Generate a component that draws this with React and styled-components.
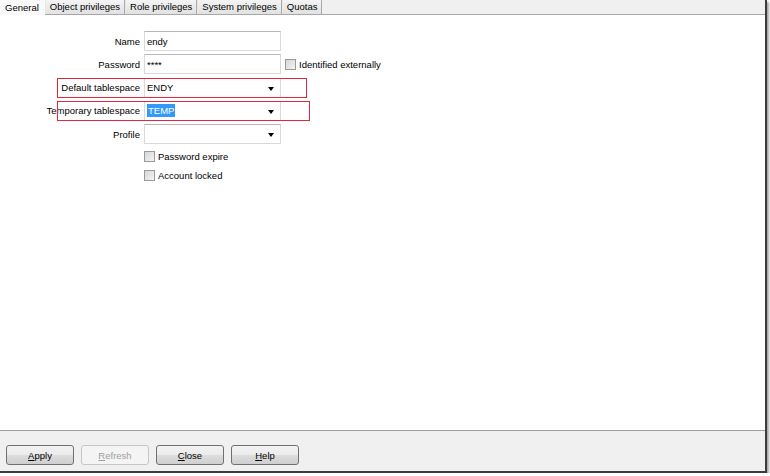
import React from 'react';
import styled, { createGlobalStyle } from 'styled-components';

const GlobalStyle = createGlobalStyle`
  html, body {
    margin: 0;
    padding: 0;
    background: #ffffff;
  }
  body {
    font-family: "Liberation Sans", Arial, sans-serif;
    font-size: 9.5px;
    color: #000;
  }
`;

const Window = styled.div`
  width: 765px;
  height: 471px;
  display: flex;
  flex-direction: column;
  background: #f0f0f0;
  border-right: 2px solid #3c3c3c;
  border-bottom: 2px solid #3c3c3c;
  box-shadow: 2px 2px 2px rgba(0, 0, 0, 0.35);
`;

const TabStrip = styled.div`
  height: 14px;
  display: flex;
  align-items: flex-end;
  background: #f0f0f0;
  border-bottom: 1px solid #a9a9a9;
`;

const Tab = styled.div`
  height: ${(p) => (p.$active ? '15px' : '14px')};
  margin-bottom: ${(p) => (p.$active ? '-1px' : '0')};
  padding: 0 ${(p) => (p.$active ? '5px' : '4px')} 0 ${(p) => (p.$active ? '5px' : '4px')};
  display: flex;
  align-items: center;
  box-sizing: border-box;
  line-height: 1;
  background: ${(p) => (p.$active ? '#f9f9f9' : 'linear-gradient(#f4f4f4, #e1e1e1)')};
  border-right: 1px solid ${(p) => (p.$active ? 'transparent' : '#a9a9a9')};
  border-left: ${(p) => (p.$first ? 'none' : '1px solid #e8e8e8')};
  white-space: nowrap;
`;

const Panel = styled.div`
  flex: 1;
  background: #ffffff;
  padding-top: 16px;
  display: flex;
  flex-direction: column;
`;

const Form = styled.div`
  display: grid;
  grid-template-columns: 140px 137px auto;
  column-gap: 4px;
  row-gap: 3.25px;
  grid-auto-rows: 20px;
  align-items: center;
`;

const Label = styled.div`
  text-align: right;
  white-space: nowrap;
`;

const Row = styled.div`
  display: contents;
`;

const Field = styled.div`
  position: relative;
  height: 20px;
  box-sizing: border-box;
  border: 1px solid #dadada;
  border-top-color: #b8b8b8;
  background: #fff;
  display: flex;
  align-items: center;
  padding-left: 2px;
`;

const Arrow = styled.span`
  position: absolute;
  right: 6px;
  top: 8px;
  width: 0;
  height: 0;
  border-left: 3.5px solid transparent;
  border-right: 3.5px solid transparent;
  border-top: 4px solid #000;
`;

const Selected = styled.span`
  background: #3399ff;
  color: #fff;
  padding: 1px 1px;
`;

const RedBox = styled.div`
  position: absolute;
  left: ${(p) => p.$left}px;
  width: ${(p) => p.$width}px;
  height: 20px;
  box-sizing: border-box;
  border: 1px solid #e2283c;
  pointer-events: none;
`;

const Annotated = styled.div`
  position: relative;
`;

const Box = styled.span`
  width: 11px;
  height: 11px;
  box-sizing: border-box;
  border: 1px solid #9a9a9a;
  background: linear-gradient(135deg, #d6d6d6, #f4f4f4);
  flex-shrink: 0;
`;

const Check = styled.label`
  display: flex;
  align-items: center;
  gap: 3px;
  white-space: nowrap;
`;

const Checks = styled.div`
  display: flex;
  flex-direction: column;
  gap: 8px;
  margin-top: 7px;
  padding-left: 144px;
`;

const Footer = styled.div`
  height: 41px;
  border-top: 1px solid #a0a0a0;
  background: #f0f0f0;
  display: flex;
  align-items: flex-start;
  gap: 7px;
  padding: 14px 0 0 6px;
  box-sizing: border-box;
`;

const Button = styled.div`
  width: 68px;
  height: 20px;
  box-sizing: border-box;
  border: 1px solid ${(p) => (p.$disabled ? '#c6c6c6' : '#707070')};
  border-radius: 3px;
  background: ${(p) =>
    p.$disabled ? '#f4f4f4' : 'linear-gradient(#f2f2f2 0%, #ebebeb 50%, #dddddd 51%, #cfcfcf 100%)'};
  color: ${(p) => (p.$disabled ? '#a0a0a0' : '#000')};
  display: flex;
  align-items: center;
  justify-content: center;
  u {
    text-decoration: underline;
  }
`;

const rows = [
  { label: 'Name', value: 'endy' },
  { label: 'Password', value: '****', extra: 'Identified externally' },
  { label: 'Default tablespace', value: 'ENDY', select: true },
  { label: 'Temporary tablespace', value: 'TEMP', select: true, selected: true },
  { label: 'Profile', value: '', select: true },
];

export default function App() {
  return (
    <>
      <GlobalStyle />
      <Window>
        <TabStrip>
          <Tab $active $first>General</Tab>
          <Tab>Object privileges</Tab>
          <Tab>Role privileges</Tab>
          <Tab>System privileges</Tab>
          <Tab>Quotas</Tab>
        </TabStrip>
        <Panel>
          <Annotated>
            <Form>
              {rows.map((r) => (
                <Row key={r.label}>
                  <Label>{r.label}</Label>
                  <Field>
                    {r.selected ? <Selected>{r.value}</Selected> : r.value}
                    {r.select && <Arrow />}
                  </Field>
                  {r.extra ? (
                    <Check>
                      <Box />
                      {r.extra}
                    </Check>
                  ) : (
                    <span />
                  )}
                </Row>
              ))}
            </Form>
            <RedBox style={{ top: 46.5 }} $left={57} $width={250} />
            <RedBox style={{ top: 69.75 }} $left={57} $width={253} />
          </Annotated>
          <Checks>
            <Check>
              <Box />
              Password expire
            </Check>
            <Check>
              <Box />
              Account locked
            </Check>
          </Checks>
        </Panel>
        <Footer>
          <Button><span><u>A</u>pply</span></Button>
          <Button $disabled><span><u>R</u>efresh</span></Button>
          <Button><span><u>C</u>lose</span></Button>
          <Button><span><u>H</u>elp</span></Button>
        </Footer>
      </Window>
    </>
  );
}
